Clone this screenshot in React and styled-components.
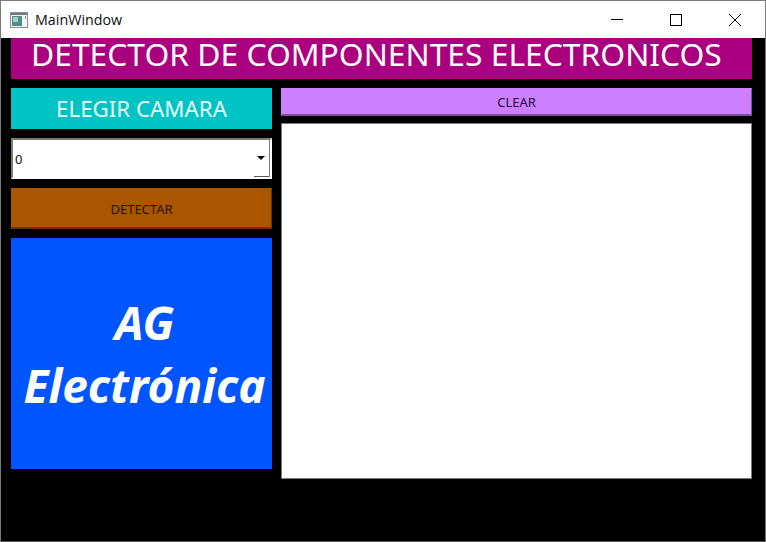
import React from 'react'
import styled, { createGlobalStyle } from 'styled-components'

const colors = {
  magenta: '#aa007f',
  cyan: '#00c3c3',
  orange: '#aa5500',
  blue: '#0055ff',
  lilac: '#cc7fff',
  frame: '#7a7a7a',
}

const GlobalStyle = createGlobalStyle`
  html, body {
    margin: 0;
    padding: 0;
    background: #000;
  }
`

const Window = styled.div`
  box-sizing: border-box;
  width: 766px;
  height: 542px;
  border: 1px solid ${colors.frame};
  border-bottom-color: #555;
  display: flex;
  flex-direction: column;
  background: #000;
  font-family: "Noto Sans", "DejaVu Sans", sans-serif;
  overflow: hidden;
`

const TitleBar = styled.div`
  height: 37px;
  flex: none;
  background: #fff;
  display: flex;
  align-items: center;
  padding: 0 1px 0 9px;
`

const AppIcon = styled.svg`
  width: 18px;
  height: 16px;
  margin-right: 7px;
  flex: none;
`

const WindowName = styled.span`
  font-family: "Open Sans", "Noto Sans", sans-serif;
  font-size: 14.3px;
  color: #111;
  flex: 1;
`

const Controls = styled.div`
  display: flex;
  height: 100%;
`

const ControlButton = styled.div`
  width: 59px;
  display: flex;
  align-items: center;
  justify-content: center;
`

const Content = styled.main`
  flex: 1;
  display: flex;
  flex-direction: column;
  padding: 0 13px 0 10px;
`

const Banner = styled.h1`
  margin: 0 0 9px;
  height: 41px;
  flex: none;
  background: ${colors.magenta};
  color: #fff;
  font-size: 31.8px;
  font-weight: 400;
  line-height: 31px;
  padding-left: 20px;
  white-space: nowrap;
`

const Columns = styled.div`
  display: grid;
  grid-template-columns: 261px 471px;
  column-gap: 9px;
  align-items: start;
`

const LeftColumn = styled.div`
  display: flex;
  flex-direction: column;
  gap: 9px;
`

const RightColumn = styled.div`
  display: flex;
  flex-direction: column;
  gap: 7px;
`

const SectionLabel = styled.div`
  height: 41px;
  background: ${colors.cyan};
  color: #e8ffff;
  font-size: 22.3px;
  display: flex;
  align-items: center;
  justify-content: center;
`

const Combo = styled.div`
  box-sizing: border-box;
  height: 41px;
  background: #fff;
  border: 2px solid #fff;
  border-top-color: ${colors.frame};
  border-left-color: ${colors.frame};
  position: relative;
  display: flex;
  align-items: center;
  padding: 1px 0 0 2px;
  font-size: 13px;
  color: #111;
`

const ComboArrow = styled.span`
  position: absolute;
  right: 5px;
  top: 16px;
  width: 0;
  height: 0;
  border-left: 4px solid transparent;
  border-right: 4px solid transparent;
  border-top: 4px solid #000;
`

const ComboCorner = styled.span`
  position: absolute;
  right: 0;
  bottom: 0;
  width: 16px;
  height: 1px;
  background: #555;

  &::after {
    content: '';
    position: absolute;
    right: 0;
    bottom: 0;
    width: 1px;
    height: 38px;
    background: ${colors.frame};
  }
`

const ActionButton = styled.button`
  box-sizing: border-box;
  display: block;
  width: 100%;
  height: ${props => props.$height}px;
  margin: 0;
  padding: ${props => props.$offset}px 0 0;
  background: ${props => props.$bg};
  border: 1px solid ${props => props.$bg};
  border-right-color: ${props => props.$edge};
  border-bottom: 2px solid ${props => props.$edge};
  color: ${props => props.$ink};
  font-family: inherit;
  font-size: 13px;
`

const BrandCard = styled.div`
  height: 231px;
  background: ${colors.blue};
  color: #fff;
  font-size: 46px;
  font-weight: 700;
  font-style: italic;
  line-height: 63px;
  text-align: center;
  display: flex;
  flex-direction: column;
  justify-content: center;
  padding-left: 6px;
  white-space: nowrap;
`

const OutputBox = styled.div`
  box-sizing: border-box;
  height: 356px;
  background: #fff;
  border: 1px solid ${colors.frame};
`

export default function App() {
  return (
    <>
      <GlobalStyle />
      <Window>
        <TitleBar>
          <AppIcon viewBox="0 0 18 16">
            <rect x="0.5" y="0.5" width="17" height="15" fill="#f4f4f4" stroke="#8a8f96" />
            <rect x="1" y="1" width="16" height="2" fill="#6f7880" />
            <rect x="2" y="4" width="10" height="10" fill="#4f8f84" />
            <rect x="3" y="5" width="5" height="5" fill="#a9cfc9" />
            <rect x="15" y="4" width="1" height="3" fill="#7d8790" />
          </AppIcon>
          <WindowName>MainWindow</WindowName>
          <Controls>
            <ControlButton>
              <svg width="12" height="12" viewBox="0 0 12 12">
                <path d="M0 5.5H12" stroke="#000" fill="none" />
              </svg>
            </ControlButton>
            <ControlButton>
              <svg width="12" height="12" viewBox="0 0 12 12">
                <rect x="0.5" y="0.5" width="11" height="11" stroke="#000" fill="none" />
              </svg>
            </ControlButton>
            <ControlButton>
              <svg width="12" height="12" viewBox="0 0 12 12">
                <path d="M0 0L12 12M12 0L0 12" stroke="#000" fill="none" />
              </svg>
            </ControlButton>
          </Controls>
        </TitleBar>
        <Content>
          <Banner>DETECTOR DE COMPONENTES ELECTRONICOS</Banner>
          <Columns>
            <LeftColumn>
              <SectionLabel>ELEGIR CAMARA</SectionLabel>
              <Combo>
                0
                <ComboArrow />
                <ComboCorner />
              </Combo>
              <ActionButton $height={41} $offset={2} $bg={colors.orange} $edge="#6b3500" $ink="#2a1200">
                DETECTAR
              </ActionButton>
              <BrandCard>
                <div>AG</div>
                <div>Electrónica</div>
              </BrandCard>
            </LeftColumn>
            <RightColumn>
              <ActionButton $height={28} $offset={0} $bg={colors.lilac} $edge="#7a5299" $ink="#1f0a33">
                CLEAR
              </ActionButton>
              <OutputBox />
            </RightColumn>
          </Columns>
        </Content>
      </Window>
    </>
  )
}
